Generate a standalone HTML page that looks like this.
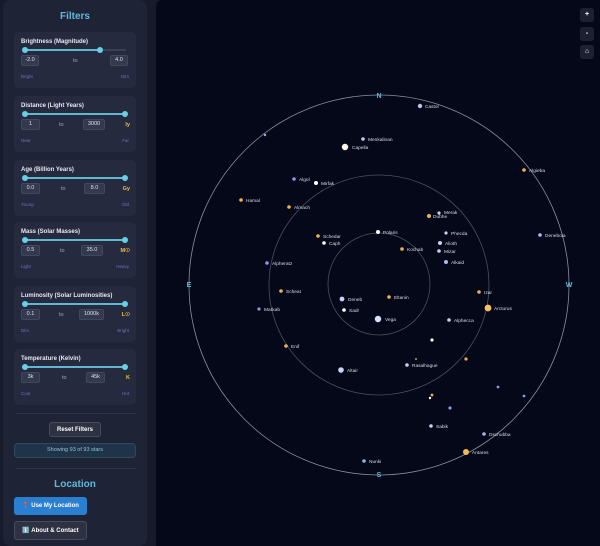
<!DOCTYPE html>
<html><head><meta charset="utf-8"><style>
*{margin:0;padding:0;box-sizing:border-box}
body{width:600px;height:546px;background:#161a2b;font-family:"Liberation Sans",sans-serif;position:relative;overflow:hidden}
.side{position:absolute;left:3px;top:0;width:144px;height:546px;background:#1f2336;border-radius:8px}
h2{position:absolute;color:#5fb8db;font-size:10px;font-weight:bold;width:150px;text-align:center;left:0}
.card{position:absolute;left:14px;width:122px;height:56px;background:#262a3f;border-radius:5px}
.card .t{position:absolute;left:7px;top:7px;font-size:6px;font-weight:bold;color:#e6e8f0}
.track{position:absolute;left:10px;width:102px;top:17px;height:2px;background:#3a4058}
.fill{position:absolute;top:17px;height:2px;background:#5fb8d0}
.knob{position:absolute;top:15px;width:6px;height:6px;border-radius:50%;background:#67cfe6}
.in{position:absolute;top:23px;height:11px;background:#33394f;border:1px solid #40475e;border-radius:2px;color:#dfe3ea;font-size:5.5px;text-align:center;line-height:9px}
.to{position:absolute;top:26px;font-size:5.5px;color:#9aa8c0}
.u{position:absolute;top:26px;right:6px;font-size:5.5px;color:#f0c040;font-weight:bold}
.lb{position:absolute;top:42px;font-size:4.5px;color:#7a6bc0}
.map{position:absolute;left:156px;top:0;width:444px;height:546px;background:#050818;border-radius:6px 0 0 0}
.zb{position:absolute;left:580px;width:14px;height:14px;background:#1c2030;border-radius:3px;color:#fff;font-size:7px;text-align:center;line-height:14px;font-weight:bold}
.btn{position:absolute;color:#fff;font-size:6px;font-weight:bold;text-align:center;border-radius:3px}
</style></head><body>
<div class="side"></div>
<h2 style="top:11px">Filters</h2>

<div class="card" style="top:32px"><div class="t">Brightness (Magnitude)</div><div class="track"></div><div class="fill" style="left:10px;width:76px"></div><div class="knob" style="left:8px"></div><div class="knob" style="left:83px"></div><div class="in" style="left:7px;width:18px">-2.0</div><div class="to" style="left:59px">to</div><div class="in" style="left:96px;width:18px">4.0</div><div class="lb" style="left:7px">Bright</div><div class="lb" style="right:7px">Dim</div></div>

<div class="card" style="top:96px"><div class="t">Distance (Light Years)</div><div class="fill" style="left:10px;width:102px"></div><div class="knob" style="left:8px"></div><div class="knob" style="left:108px"></div><div class="in" style="left:7px;width:19px">1</div><div class="to" style="left:45px">to</div><div class="in" style="left:69px;width:22px">3000</div><div class="u">ly</div><div class="lb" style="left:7px">Near</div><div class="lb" style="right:7px">Far</div></div>

<div class="card" style="top:160px"><div class="t">Age (Billion Years)</div><div class="fill" style="left:10px;width:102px"></div><div class="knob" style="left:8px"></div><div class="knob" style="left:108px"></div><div class="in" style="left:7px;width:19px">0.0</div><div class="to" style="left:47px">to</div><div class="in" style="left:70px;width:21px">8.0</div><div class="u">Gy</div><div class="lb" style="left:7px">Young</div><div class="lb" style="right:7px">Old</div></div>

<div class="card" style="top:222px"><div class="t">Mass (Solar Masses)</div><div class="fill" style="left:10px;width:102px"></div><div class="knob" style="left:8px"></div><div class="knob" style="left:108px"></div><div class="in" style="left:7px;width:19px">0.5</div><div class="to" style="left:46px">to</div><div class="in" style="left:67px;width:22px">35.0</div><div class="u">M☉</div><div class="lb" style="left:7px">Light</div><div class="lb" style="right:7px">Heavy</div></div>

<div class="card" style="top:286px"><div class="t">Luminosity (Solar Luminosities)</div><div class="fill" style="left:10px;width:102px"></div><div class="knob" style="left:8px"></div><div class="knob" style="left:108px"></div><div class="in" style="left:7px;width:19px">0.1</div><div class="to" style="left:45px">to</div><div class="in" style="left:65px;width:25px">1000k</div><div class="u">L☉</div><div class="lb" style="left:7px">Dim</div><div class="lb" style="right:7px">Bright</div></div>

<div class="card" style="top:349px"><div class="t">Temperature (Kelvin)</div><div class="fill" style="left:10px;width:102px"></div><div class="knob" style="left:8px"></div><div class="knob" style="left:108px"></div><div class="in" style="left:7px;width:19px">3k</div><div class="to" style="left:48px">to</div><div class="in" style="left:72px;width:19px">45k</div><div class="u">K</div><div class="lb" style="left:7px">Cool</div><div class="lb" style="right:7px">Hot</div></div>

<div style="position:absolute;left:16px;top:413px;width:120px;height:1px;background:#2e3348"></div>
<div class="btn" style="left:49px;top:422px;width:52px;height:15px;line-height:15px;background:#2d3142;border:1px solid #464b5e">Reset Filters</div>
<div style="position:absolute;left:14px;top:443px;width:122px;height:15px;background:#1f3448;border:1px solid #2c4a60;border-radius:4px;color:#8fc4d8;font-size:5.5px;text-align:center;line-height:13px">Showing 93 of 93 stars</div>
<div style="position:absolute;left:16px;top:468px;width:120px;height:1px;background:#2e3348"></div>
<h2 style="top:479px">Location</h2>
<div class="btn" style="left:14px;top:497px;width:73px;height:18px;line-height:18px;background:#2a7fd0">📍 Use My Location</div>
<div class="btn" style="left:14px;top:521px;width:73px;height:19px;line-height:19px;background:#2d3142;border:1px solid #464b5e">ℹ️ About &amp; Contact</div>

<div class="map"></div>
<div class="zb" style="top:8px">+</div><div class="zb" style="top:27px">-</div><div class="zb" style="top:45px">⌂</div>

<svg width="600" height="546" style="position:absolute;left:0;top:0" font-family="Liberation Sans, sans-serif">
<g fill="none" stroke-width="0.8">
<circle cx="379" cy="285" r="190" stroke="#8a8fa8"/>
<circle cx="379" cy="285" r="110" stroke="#4a4f66"/>
<circle cx="379" cy="284" r="51" stroke="#4a4f66"/>
</g>
<g fill="#5fb8d8" font-size="7" font-weight="bold" text-anchor="middle">
<text x="379" y="98">N</text><text x="379" y="477">S</text><text x="189" y="287">E</text><text x="569" y="287">W</text>
</g>
<g font-size="4.8" fill="#d8dce8">
<circle cx="420" cy="106" r="2.2" fill="#b8c4f0"/><text x="425" y="108">Castor</text>
<circle cx="265" cy="135" r="1.2" fill="#9aa8e0"/>
<circle cx="363" cy="139" r="1.8" fill="#c0c8f0"/><text x="368" y="141">Menkalinan</text>
<circle cx="345" cy="147" r="3.2" fill="#fff8e8"/><text x="352" y="149">Capella</text>
<circle cx="294" cy="179" r="1.8" fill="#8898e8"/><text x="299" y="181">Algol</text>
<circle cx="316" cy="183" r="2" fill="#fff"/><text x="321" y="185">Mirfak</text>
<circle cx="241" cy="200" r="1.8" fill="#f0b050"/><text x="246" y="202">Hamal</text>
<circle cx="289" cy="207" r="1.8" fill="#f0b050"/><text x="294" y="209">Almach</text>
<circle cx="524" cy="170" r="1.8" fill="#f0b050"/><text x="529" y="172">Algieba</text>
<circle cx="540" cy="235" r="1.8" fill="#a8c0f8"/><text x="545" y="237">Denebola</text>
<circle cx="429" cy="216" r="2" fill="#f0b050"/><text x="433" y="218">Dubhe</text>
<circle cx="439" cy="213" r="1.6" fill="#c8d0f0"/><text x="444" y="214">Merak</text>
<circle cx="318" cy="236" r="1.8" fill="#f0b050"/><text x="323" y="238">Schedar</text>
<circle cx="324" cy="243" r="1.8" fill="#fff"/><text x="329" y="245">Caph</text>
<circle cx="378" cy="232" r="2" fill="#fff"/><text x="383" y="234">Polaris</text>
<circle cx="402" cy="249" r="1.8" fill="#f0b050"/><text x="407" y="251">Kochab</text>
<circle cx="446" cy="233" r="1.6" fill="#c8d0f0"/><text x="451" y="235">Phecda</text>
<circle cx="440" cy="243" r="2" fill="#c8d0f0"/><text x="445" y="245">Alioth</text>
<circle cx="439" cy="251" r="1.8" fill="#c8d0f0"/><text x="444" y="253">Mizar</text>
<circle cx="446" cy="262" r="2" fill="#a8b8f0"/><text x="451" y="264">Alkaid</text>
<circle cx="267" cy="263" r="1.8" fill="#8898e8"/><text x="272" y="265">Alpheratz</text>
<circle cx="281" cy="291" r="1.8" fill="#f0b050"/><text x="286" y="293">Scheat</text>
<circle cx="259" cy="309" r="1.6" fill="#8898e8"/><text x="264" y="311">Markab</text>
<circle cx="342" cy="299" r="2.4" fill="#c8d0f8"/><text x="348" y="301">Deneb</text>
<circle cx="344" cy="310" r="1.8" fill="#fff"/><text x="349" y="312">Sadr</text>
<circle cx="378" cy="319" r="3.2" fill="#d8e0ff"/><text x="385" y="321">Vega</text>
<circle cx="389" cy="297" r="1.8" fill="#f0b050"/><text x="394" y="299">Eltanin</text>
<circle cx="479" cy="292" r="1.8" fill="#f0b050"/><text x="484" y="294">Izar</text>
<circle cx="488" cy="308" r="3.4" fill="#f8c060"/><text x="494" y="310">Arcturus</text>
<circle cx="449" cy="320" r="1.8" fill="#c8d0f0"/><text x="454" y="322">Alphecca</text>
<circle cx="432" cy="340" r="1.6" fill="#fff"/>
<circle cx="286" cy="346" r="1.8" fill="#f0b050"/><text x="291" y="348">Enif</text>
<circle cx="407" cy="365" r="1.8" fill="#c8d0f0"/><text x="412" y="367">Rasalhague</text>
<circle cx="416" cy="359" r="0.9" fill="#f0d060"/>
<circle cx="466" cy="359" r="1.6" fill="#f0b050"/>
<circle cx="341" cy="370" r="2.8" fill="#c8d4f8"/><text x="347" y="372">Altair</text>
<circle cx="432" cy="395" r="1.4" fill="#f0b050"/><circle cx="430" cy="398" r="1.2" fill="#fff"/>
<circle cx="498" cy="387" r="1.4" fill="#8898e8"/><circle cx="524" cy="396" r="1.4" fill="#8898e8"/><circle cx="450" cy="408" r="1.6" fill="#8898e8"/>
<circle cx="431" cy="426" r="1.8" fill="#c8d0f0"/><text x="436" y="428">Sabik</text>
<circle cx="484" cy="434" r="1.8" fill="#a8b0f0"/><text x="489" y="436">Dschubba</text>
<circle cx="466" cy="452" r="3" fill="#f8b850"/><text x="472" y="454">Antares</text>
<circle cx="364" cy="461" r="1.8" fill="#8ab0f0"/><text x="369" y="463">Nunki</text>
</g>
</svg>
</body></html>
